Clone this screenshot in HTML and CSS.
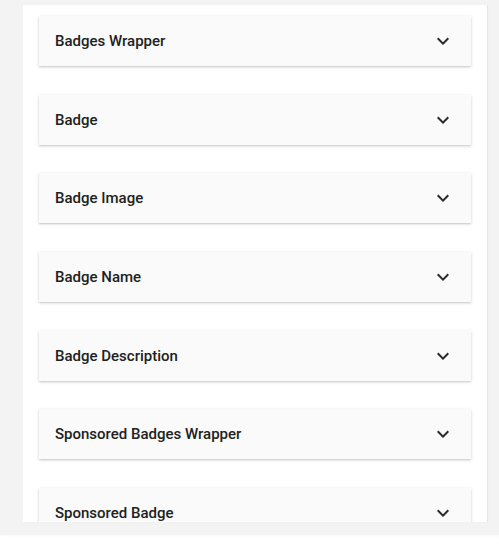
FILE: index.html
```html
<!DOCTYPE html>
<html>
<head>
<meta charset="utf-8">
<link rel="stylesheet" href="styles.css">
</head>
<body>
<div class="page">
  <div class="panel">
    <div class="card"><span class="title">Badges Wrapper</span><svg class="chev" viewBox="0 0 24 24"><path d="M16.59 8.59L12 13.17 7.41 8.59 6 10l6 6 6-6z"/></svg></div>
    <div class="card"><span class="title">Badge</span><svg class="chev" viewBox="0 0 24 24"><path d="M16.59 8.59L12 13.17 7.41 8.59 6 10l6 6 6-6z"/></svg></div>
    <div class="card"><span class="title">Badge Image</span><svg class="chev" viewBox="0 0 24 24"><path d="M16.59 8.59L12 13.17 7.41 8.59 6 10l6 6 6-6z"/></svg></div>
    <div class="card"><span class="title">Badge Name</span><svg class="chev" viewBox="0 0 24 24"><path d="M16.59 8.59L12 13.17 7.41 8.59 6 10l6 6 6-6z"/></svg></div>
    <div class="card"><span class="title">Badge Description</span><svg class="chev" viewBox="0 0 24 24"><path d="M16.59 8.59L12 13.17 7.41 8.59 6 10l6 6 6-6z"/></svg></div>
    <div class="card"><span class="title">Sponsored Badges Wrapper</span><svg class="chev" viewBox="0 0 24 24"><path d="M16.59 8.59L12 13.17 7.41 8.59 6 10l6 6 6-6z"/></svg></div>
    <div class="card"><span class="title">Sponsored Badge</span><svg class="chev" viewBox="0 0 24 24"><path d="M16.59 8.59L12 13.17 7.41 8.59 6 10l6 6 6-6z"/></svg></div>
  </div>
  <div class="gap"></div>
  <div class="footer"></div>
</div>
</body>
</html>
```
FILE: styles.css
```css
html, body {
  margin: 0;
  padding: 0;
  background: #f3f3f3;
  font-family: Roboto, "Liberation Sans", sans-serif;
}
.page {
  width: 499px;
  height: 558px;
  overflow: hidden;
  display: flex;
  flex-direction: column;
}
.panel {
  margin: 5px 0 0 23px;
  width: 464px;
  height: 517px;
  flex: none;
  box-sizing: border-box;
  background: #ffffff;
  padding: 11px 16px 0;
  overflow: hidden;
  box-shadow: 1px 0 1px rgba(0,0,0,0.06);
}
.card {
  height: 50px;
  background: #fafafa;
  box-shadow: 0 1px 3px rgba(0,0,0,0.18), 0 1px 1px rgba(0,0,0,0.06);
  display: flex;
  align-items: center;
  justify-content: space-between;
  padding: 0 16px;
  margin-bottom: 28.67px;
}
.title {
  font-size: 15px;
  font-weight: 500;
  color: #212121;
}
.chev {
  width: 24px;
  height: 24px;
  fill: #2a2a2a;
}
.gap {
  height: 13px;
  flex: none;
}
.footer {
  flex: 1;
  background: #ffffff;
  box-shadow: inset 0 3px 4px -3px rgba(0,0,0,0.04);
}
```
